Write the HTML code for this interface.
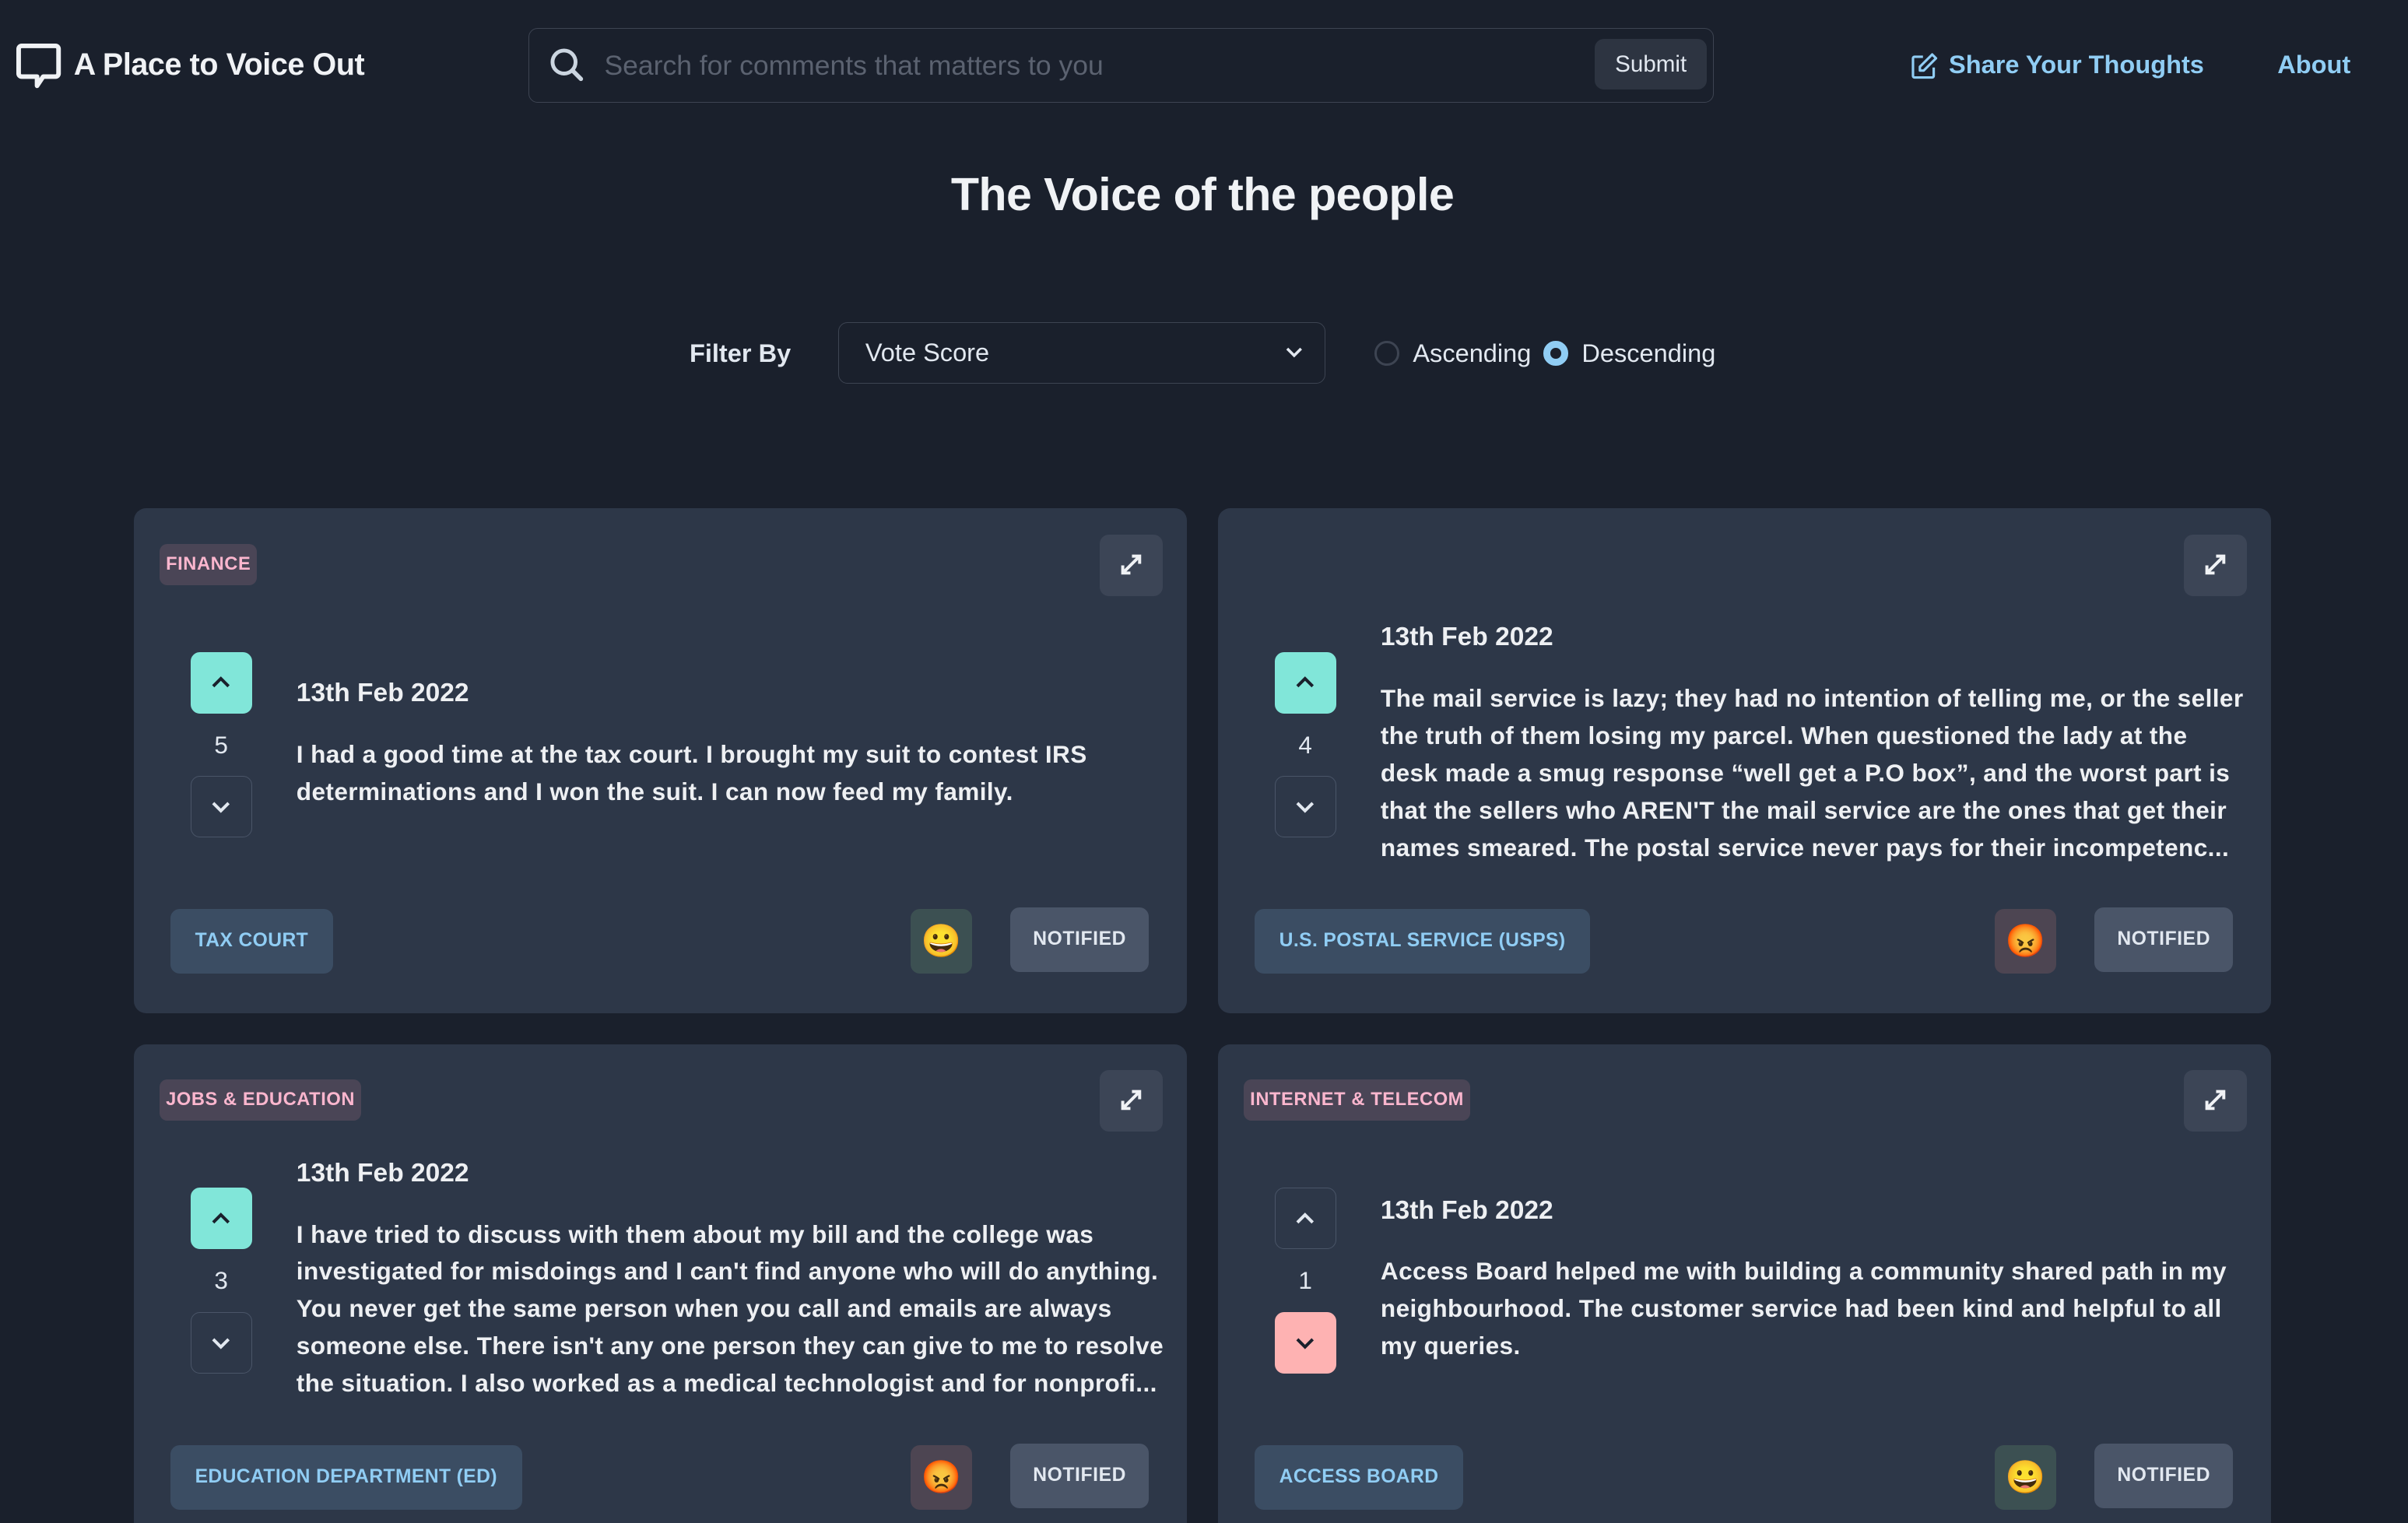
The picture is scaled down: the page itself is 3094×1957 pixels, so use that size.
<!DOCTYPE html>
<html><head><meta charset="utf-8">
<style>
*{box-sizing:border-box;margin:0;padding:0}
html,body{background:#1a202c;overflow:hidden}
body{width:1568px;height:992px;zoom:1.97321;position:relative;font-family:"Liberation Sans",sans-serif;color:#e2e8f0}
.abs{position:absolute}
.logo{left:10px;top:28px}
.brand{left:48px;top:31px;font-size:20px;font-weight:700;color:#f0f2f5;letter-spacing:-0.2px}
.search{left:344px;top:18px;width:772px;height:49px;border:1px solid #3d4452;border-radius:6px}
.ph{left:49px;top:14px;font-size:18px;color:#5b6270}
.submit{right:4px;top:7px;width:73px;height:33px;background:#2d3441;border-radius:6px;font-size:15px;font-weight:400;color:#e2e8f0;text-align:center;line-height:33px}
.nav{top:33px;font-size:16.5px;font-weight:700;color:#90cdf4}
h1{position:absolute;left:0;width:1566px;text-align:center;top:109px;font-size:30px;font-weight:700;color:#f0f2f5;letter-spacing:-0.3px}
.fb{left:449px;top:221px;font-size:16.5px;font-weight:700}
.sel{left:546px;top:210px;width:317px;height:40px;border:1px solid #3d4452;border-radius:6px;font-size:16.5px;padding:10px 17px}
.radio{top:222px;width:16px;height:16px;border-radius:50%}
.rl{top:221px;font-size:16.5px}
.card{position:absolute;width:686px;height:329px;background:#2d3748;border-radius:8px}
.cat{position:absolute;left:17px;top:23px;height:27px;padding:0 4px;border-radius:5px;background:#4a4556;color:#fbb6ce;font-size:12px;font-weight:700;line-height:27px;letter-spacing:.3px}
.exp{position:absolute;right:16px;top:17px;width:41px;height:40px;border-radius:6px;background:#3c4556}
.mid{position:absolute;left:37px;top:65px;width:640px;height:178px;display:flex;align-items:center}
.vote{width:40px;flex:none;text-align:center}
.vb{width:40px;height:40px;border-radius:6px;border:1px solid #4a5568;display:flex;align-items:center;justify-content:center}
.vb.up{background:#81e6d9;border-color:#81e6d9}
.vb.dn{background:#feb2b2;border-color:#feb2b2}
.cnt{height:41px;line-height:41px;font-size:16px;color:#e2e8f0}
.txt{margin-left:29px;white-space:nowrap}
.date{font-size:17px;font-weight:700;margin-bottom:18px;color:#eef0f3}
.body{font-size:16px;line-height:24.3px;color:#eef0f3;font-weight:700;letter-spacing:0.2px}
.org{position:absolute;left:24px;top:261px;height:42px;padding:0 16px;border-radius:6px;background:#3b4d63;color:#90cdf4;font-size:12.5px;font-weight:700;line-height:42px;letter-spacing:.2px}
.emo{position:absolute;left:506px;top:261px;width:40px;height:42px;border-radius:6px;font-size:21px;line-height:42px;text-align:center}
.g{background:#3c5052}.r{background:#4d4552}
.not{position:absolute;left:571px;top:260px;width:90px;height:42px;border-radius:6px;background:#4a5568;color:#e2e8f0;font-size:12.5px;font-weight:700;line-height:42px;text-align:center;letter-spacing:.3px}
</style></head><body>
<svg class="abs logo" width="30" height="30" viewBox="0 0 30 30"><path d="M4 2h22a2 2 0 0 1 2 2v16a2 2 0 0 1-2 2H18l-4 6v-6H4a2 2 0 0 1-2-2V4a2 2 0 0 1 2-2z" fill="none" stroke="#f0f2f5" stroke-width="3" stroke-linejoin="round"/></svg>
<div class="abs brand">A Place to Voice Out</div>
<div class="abs search">
<svg class="abs" style="left:13px;top:12px" width="24" height="24" viewBox="0 0 24 24"><circle cx="10" cy="10" r="7.5" fill="none" stroke="#cbd5e0" stroke-width="2.5"/><path d="M15.5 15.5L21 21" stroke="#cbd5e0" stroke-width="2.8" stroke-linecap="round"/></svg>
<div class="abs ph">Search for comments that matters to you</div>
<div class="abs submit">Submit</div>
</div>
<svg class="abs" style="left:1244px;top:34px" width="18" height="18" viewBox="0 0 18 18"><path d="M8 3H2.5a1 1 0 0 0-1 1v11.5a1 1 0 0 0 1 1H14a1 1 0 0 0 1-1V10" fill="none" stroke="#90cdf4" stroke-width="1.6"/><path d="M14 1.5l2.5 2.5-8 8H6v-2.5z" fill="none" stroke="#90cdf4" stroke-width="1.6" stroke-linejoin="round"/></svg>
<div class="abs nav" style="left:1269px">Share Your Thoughts</div>
<div class="abs nav" style="left:1483px">About</div>
<h1>The Voice of the people</h1>
<div class="abs fb">Filter By</div>
<div class="abs sel">Vote Score<svg class="abs" style="right:14px;top:15px" width="12" height="8" viewBox="0 0 12 8"><path d="M1.5 1.5l4.5 4.5 4.5-4.5" fill="none" stroke="#e2e8f0" stroke-width="1.8"/></svg></div>
<div class="abs radio" style="left:895px;border:2px solid #3d4452"></div>
<div class="abs rl" style="left:920px">Ascending</div>
<div class="abs radio" style="left:1005px;border:5px solid #90cdf4;background:#1a202c"></div>
<div class="abs rl" style="left:1030px">Descending</div>

<div class="card" style="left:87px;top:331px">
<div class="cat">FINANCE</div>
<div class="exp"><svg width="41" height="40" viewBox="0 0 41 40"><path d="M15 25l11-11M21 14h5v5M15 20v5h5" fill="none" stroke="#f0f2f5" stroke-width="2"/></svg></div>
<div class="mid"><div class="vote"><div class="vb up"><svg width="14" height="9" viewBox="0 0 14 9"><path d="M2 7l5-5 5 5" fill="none" stroke="#1a202c" stroke-width="2"/></svg></div><div class="cnt">5</div><div class="vb"><svg width="14" height="9" viewBox="0 0 14 9"><path d="M2 2l5 5 5-5" fill="none" stroke="#e2e8f0" stroke-width="2"/></svg></div></div>
<div class="txt"><div class="date">13th Feb 2022</div><div class="body">I had a good time at the tax court. I brought my suit to contest IRS<br>determinations and I won the suit. I can now feed my family.</div></div></div>
<div class="org">TAX COURT</div><div class="emo g">😀</div><div class="not">NOTIFIED</div>
</div>

<div class="card" style="left:793px;top:331px">
<div class="exp"><svg width="41" height="40" viewBox="0 0 41 40"><path d="M15 25l11-11M21 14h5v5M15 20v5h5" fill="none" stroke="#f0f2f5" stroke-width="2"/></svg></div>
<div class="mid"><div class="vote"><div class="vb up"><svg width="14" height="9" viewBox="0 0 14 9"><path d="M2 7l5-5 5 5" fill="none" stroke="#1a202c" stroke-width="2"/></svg></div><div class="cnt">4</div><div class="vb"><svg width="14" height="9" viewBox="0 0 14 9"><path d="M2 2l5 5 5-5" fill="none" stroke="#e2e8f0" stroke-width="2"/></svg></div></div>
<div class="txt"><div class="date">13th Feb 2022</div><div class="body">The mail service is lazy; they had no intention of telling me, or the seller<br>the truth of them losing my parcel. When questioned the lady at the<br>desk made a smug response “well get a P.O box”, and the worst part is<br>that the sellers who AREN'T the mail service are the ones that get their<br>names smeared. The postal service never pays for their incompetenc...</div></div></div>
<div class="org">U.S. POSTAL SERVICE (USPS)</div><div class="emo r">😡</div><div class="not">NOTIFIED</div>
</div>

<div class="card" style="left:87px;top:680px">
<div class="cat">JOBS &amp; EDUCATION</div>
<div class="exp"><svg width="41" height="40" viewBox="0 0 41 40"><path d="M15 25l11-11M21 14h5v5M15 20v5h5" fill="none" stroke="#f0f2f5" stroke-width="2"/></svg></div>
<div class="mid"><div class="vote"><div class="vb up"><svg width="14" height="9" viewBox="0 0 14 9"><path d="M2 7l5-5 5 5" fill="none" stroke="#1a202c" stroke-width="2"/></svg></div><div class="cnt">3</div><div class="vb"><svg width="14" height="9" viewBox="0 0 14 9"><path d="M2 2l5 5 5-5" fill="none" stroke="#e2e8f0" stroke-width="2"/></svg></div></div>
<div class="txt"><div class="date">13th Feb 2022</div><div class="body">I have tried to discuss with them about my bill and the college was<br>investigated for misdoings and I can't find anyone who will do anything.<br>You never get the same person when you call and emails are always<br>someone else. There isn't any one person they can give to me to resolve<br>the situation. I also worked as a medical technologist and for nonprofi...</div></div></div>
<div class="org">EDUCATION DEPARTMENT (ED)</div><div class="emo r">😡</div><div class="not">NOTIFIED</div>
</div>

<div class="card" style="left:793px;top:680px">
<div class="cat">INTERNET &amp; TELECOM</div>
<div class="exp"><svg width="41" height="40" viewBox="0 0 41 40"><path d="M15 25l11-11M21 14h5v5M15 20v5h5" fill="none" stroke="#f0f2f5" stroke-width="2"/></svg></div>
<div class="mid"><div class="vote"><div class="vb"><svg width="14" height="9" viewBox="0 0 14 9"><path d="M2 7l5-5 5 5" fill="none" stroke="#e2e8f0" stroke-width="2"/></svg></div><div class="cnt">1</div><div class="vb dn"><svg width="14" height="9" viewBox="0 0 14 9"><path d="M2 2l5 5 5-5" fill="none" stroke="#1a202c" stroke-width="2"/></svg></div></div>
<div class="txt"><div class="date">13th Feb 2022</div><div class="body">Access Board helped me with building a community shared path in my<br>neighbourhood. The customer service had been kind and helpful to all<br>my queries.</div></div></div>
<div class="org">ACCESS BOARD</div><div class="emo g">😀</div><div class="not">NOTIFIED</div>
</div>
</body></html>
